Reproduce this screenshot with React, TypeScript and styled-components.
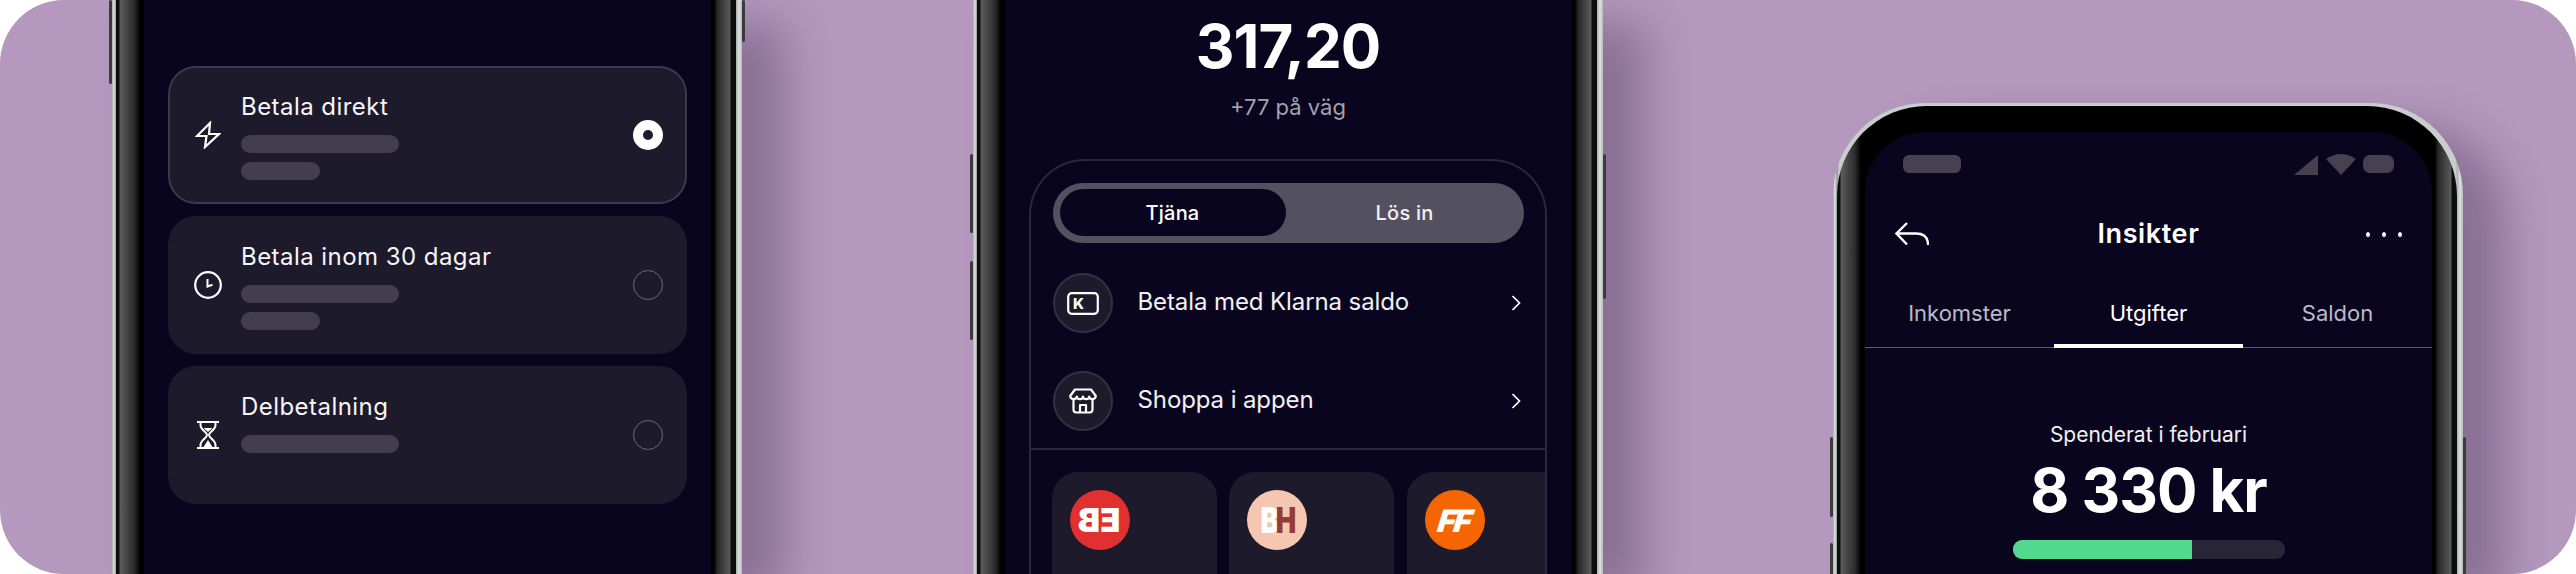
import React from 'react';
import styled, { createGlobalStyle } from 'styled-components';

const GlobalStyle = createGlobalStyle`
  html, body {
    margin: 0;
    height: 574px;
    overflow: hidden;
    background: #fff;
  }
  * {
    box-sizing: border-box;
  }
`;

const BoltIcon = () => (
  <svg width="26" height="28" viewBox="0 0 26 28" fill="none" stroke="#fff" strokeWidth="2.2">
    <path d="M15 2 L2 15 H11.5 L10 26 L24 13 H14 Z" />
  </svg>
);

const ClockIcon = () => (
  <svg width="28" height="28" viewBox="0 0 28 28" fill="none" stroke="#fff" strokeWidth="2.2">
    <circle cx="14" cy="14" r="12.8" />
    <path d="M13.5 8 V15.5 L18.5 13.8" strokeWidth="2" />
  </svg>
);

const HourglassIcon = () => (
  <svg width="24" height="30" viewBox="0 0 24 30" fill="none" stroke="#fff" strokeWidth="2">
    <path d="M1 2 H23 M1 28 H23" />
    <path d="M4.5 2 V5 C4.5 10 11 12 11 15 C11 18 4.5 20 4.5 25 V28 M19.5 2 V5 C19.5 10 13 12 13 15 C13 18 19.5 20 19.5 25 V28" />
    <path d="M7.5 8 H16.5 L12 12 Z" fill="#fff" stroke="none" />
    <path d="M12 20 L16.5 27 H7.5 Z" fill="#fff" stroke="none" />
  </svg>
);

const WalletIcon = () => (
  <svg width="32" height="23" viewBox="0 0 32 23" fill="none">
    <rect x="1.2" y="1.2" width="29.6" height="20.6" rx="3.5" stroke="#fff" strokeWidth="2.2" />
    <text x="6" y="17" fill="#fff" fontFamily="Inter, sans-serif" fontSize="15" fontWeight="800">K</text>
  </svg>
);

const StoreIcon = () => (
  <svg width="28" height="26" viewBox="0 0 28 26" fill="none" stroke="#fff" strokeWidth="2.2" strokeLinejoin="round">
    <path d="M6 1.5 H22 L26.8 8 C26.5 12 20.5 12 20.2 8.6 C19.8 12 14.4 12 14 8.6 C13.6 12 8.2 12 7.8 8.6 C7.5 12 1.5 12 1.2 8 Z" />
    <path d="M4.5 11 V21.5 A3 3 0 0 0 7.5 24.5 H20.5 A3 3 0 0 0 23.5 21.5 V11" />
    <path d="M11 24.5 V17 H17 V24.5" />
  </svg>
);

const ChevronIcon = () => (
  <svg width="10" height="16" viewBox="0 0 10 16" fill="none" stroke="#fff" strokeWidth="1.7">
    <path d="M1.5 1 L8.5 8 L1.5 15" />
  </svg>
);

const BackIcon = () => (
  <svg width="34" height="24" viewBox="0 0 34 24" fill="none" stroke="#fff" strokeWidth="2.4">
    <path d="M12 1 L1.5 11.5 L12 22.5 M1.5 11.5 H21 C28 11.5 33 15 33 23" />
  </svg>
);

const SignalIcon = () => (
  <svg width="24" height="20" viewBox="0 0 24 20">
    <path d="M24 0 V20 H0 Z" fill="#45414f" />
  </svg>
);

const WifiIcon = () => (
  <svg width="30" height="22" viewBox="0 0 30 22">
    <path d="M15 22 L0 6 Q15 -4 30 6 Z" fill="#45414f" />
  </svg>
);

const Stage = styled.div`
  width: 2576px;
  height: 574px;
  display: flex;
  align-items: stretch;
  gap: 230.5px;
  padding-left: 112px;
  overflow: hidden;
  border-radius: 64px;
  background: #b498bd;
  font-family: Inter, 'Noto Sans', sans-serif;
  color: #fff;
`;

const Phone = styled.div<{ $standing?: boolean }>`
  position: relative;
  flex: 0 0 630px;
  min-width: 0;
  display: flex;
  margin-top: ${p => (p.$standing ? '103px' : '0')};
  padding: ${p => (p.$standing ? '3px' : '0')} 6px 0 4px;
  border-radius: ${p => (p.$standing ? '92px 92px 0 0' : '0')};
  background: linear-gradient(90deg, #a6abab 0, #dfe4e3 2px, #8f9494 4px, #c9cdcd 6px, #c9cdcd calc(100% - 7px), #a8adad calc(100% - 6px), #dde2e1 calc(100% - 3px), #b5baba 100%);
  box-shadow: 42px 24px 44px rgba(55, 35, 70, 0.34);
`;

const SideButton = styled.span<{ $right?: boolean; $top: number; $height: number }>`
  position: absolute;
  top: ${p => p.$top}px;
  ${p => (p.$right ? 'right: -3px;' : 'left: -3px;')}
  width: 3px;
  height: ${p => p.$height}px;
  border-radius: 2px;
  background: #3b3b3d;
`;

const Bezel = styled.div<{ $standing?: boolean }>`
  flex: 1;
  display: flex;
  min-width: 0;
  padding: ${p => (p.$standing ? '26px' : '0')} 25px 0 28px;
  border-radius: ${p => (p.$standing ? '90px 90px 0 0' : '0')};
  background: linear-gradient(90deg, #0d0d0d 0, #0d0d0d 3px, #5c5c5c 4px, #2c2c2c 18px, #000 24px, #000 calc(100% - 22px), #272727 calc(100% - 19px), #5a5a5a calc(100% - 6px), #0d0d0d calc(100% - 5px), #0d0d0d 100%);
`;

const Screen = styled.div<{ $standing?: boolean }>`
  flex: 1;
  min-width: 0;
  display: flex;
  flex-direction: column;
  overflow: hidden;
  border-radius: ${p => (p.$standing ? '60px 60px 0 0' : '0')};
  background: #0a051f;
`;

const OptionList = styled.div`
  display: flex;
  flex-direction: column;
  gap: 12px;
  padding: 66px 24px 0;
`;

const OptionCard = styled.div<{ $selected?: boolean }>`
  height: 138px;
  display: flex;
  align-items: center;
  padding: 0 22px 0 24px;
  border-radius: 28px;
  border: 2px solid ${p => (p.$selected ? '#3d394b' : '#1d1a2b')};
  background: #1d1a2b;
`;

const OptionIcon = styled.div`
  flex: 0 0 28px;
  display: flex;
  align-items: center;
  justify-content: center;
  margin-right: 19px;
`;

const OptionText = styled.div`
  flex: 1;
  align-self: flex-start;
  padding-top: 22.5px;
`;

const OptionTitle = styled.div`
  font-size: 24px;
  line-height: 32px;
  letter-spacing: 0.45px;
  margin-bottom: 12.5px;
  color: #f6f5f8;
`;

const Placeholder = styled.div<{ $width: number }>`
  width: ${p => p.$width}px;
  height: 18px;
  margin-bottom: 9px;
  border-radius: 9px;
  background: #423e4e;
`;

const Radio = styled.div<{ $selected?: boolean }>`
  flex: 0 0 30px;
  height: 30px;
  border-radius: 50%;
  ${p =>
    p.$selected
      ? 'border: 10px solid #fff; background: #1d1a2b;'
      : 'border: 1.5px solid #6a6776;'}
`;

const Balance = styled.div`
  margin-top: 10px;
  text-align: center;
  font-size: 60px;
  line-height: 72px;
  letter-spacing: -1px;
  font-weight: 700;
`;

const OnTheWay = styled.div`
  margin-top: 9px;
  text-align: center;
  font-size: 22px;
  line-height: 32px;
  color: #a3a1ad;
`;

const Panel = styled.div`
  flex: 1;
  display: flex;
  flex-direction: column;
  min-height: 0;
  margin: 36px 25px 0 24px;
  overflow: hidden;
  border: 2px solid #2b2839;
  border-bottom: 0;
  border-radius: 56px 56px 0 0;
`;

const PanelTop = styled.div`
  display: flex;
  flex-direction: column;
  padding: 22px 21px 17px 22px;
  border-bottom: 2px solid #2b2839;
`;

const Segmented = styled.div`
  height: 60px;
  display: flex;
  align-items: stretch;
  margin-bottom: 30px;
  padding: 6px 0 7px 7px;
  border-radius: 30px;
  background: #53515f;
`;

const Segment = styled.div<{ $active?: boolean }>`
  flex: ${p => (p.$active ? '0 0 226px' : '1')};
  display: flex;
  align-items: center;
  justify-content: center;
  border-radius: 24px;
  font-size: 20px;
  font-weight: 500;
  letter-spacing: 0.2px;
  color: ${p => (p.$active ? '#fff' : '#f1f0f3')};
  background: ${p => (p.$active ? '#0a051f' : 'transparent')};
`;

const ActionRow = styled.div`
  height: 60px;
  display: flex;
  align-items: center;
  margin-bottom: 38px;
  &:last-child {
    margin-bottom: 0;
  }
`;

const ActionIcon = styled.div`
  flex: 0 0 60px;
  height: 60px;
  display: flex;
  align-items: center;
  justify-content: center;
  margin-right: 25px;
  border: 2px solid #34313f;
  border-radius: 50%;
  background: #1d1a2b;
`;

const ActionLabel = styled.div`
  flex: 1;
  font-size: 24px;
  line-height: 28px;
  margin-top: -3px;
  letter-spacing: -0.1px;
  color: #f1f0f3;
`;

const ChevronSlot = styled.div`
  display: flex;
  margin-right: 3px;
`;

const Shelf = styled.div`
  flex: 1;
  display: flex;
  gap: 12.5px;
  padding: 22px 0 0 21px;
`;

const MerchantCard = styled.div`
  flex: 0 0 165px;
  padding: 18px;
  border-radius: 26px 26px 0 0;
  background: #1d1a2b;
`;

const MerchantLogo = styled.div<{ $bg: string }>`
  width: 60px;
  height: 60px;
  display: flex;
  align-items: center;
  justify-content: center;
  overflow: hidden;
  border-radius: 50%;
  background: ${p => p.$bg};
  font-family: Inter, sans-serif;
  font-weight: 900;
  line-height: 1;
`;

const MirroredMark = styled.span`
  font-size: 33px;
  letter-spacing: 0;
  color: #fff;
  transform: scaleX(-1);
`;

const SplitMark = styled.span`
  display: inline-flex;
  font-size: 35px;
  letter-spacing: -4px;
  color: #fff;
  transform: scaleX(0.78);
`;

const SplitTail = styled.span`
  color: #963a38;
`;

const SlantMark = styled.span`
  font-size: 31px;
  font-style: italic;
  letter-spacing: -2px;
  color: #fff;
  transform: skewX(-8deg);
`;

const StatusBar = styled.div`
  height: 22px;
  display: flex;
  align-items: flex-end;
  justify-content: space-between;
  margin-top: 21px;
  padding: 0 38px;
`;

const StatusPill = styled.div`
  width: 58px;
  height: 18px;
  margin-bottom: 2px;
  border-radius: 6px;
  background: #45414f;
`;

const StatusIcons = styled.div`
  display: flex;
  align-items: flex-end;
  gap: 8px;
`;

const Battery = styled.div`
  width: 31px;
  height: 18px;
  margin: 0 0 2px -1px;
  border-radius: 7px;
  background: #45414f;
`;

const NavBar = styled.div`
  height: 50px;
  display: grid;
  grid-template-columns: 1fr auto 1fr;
  align-items: center;
  margin-top: 34px;
  padding: 0 30px;
`;

const NavTitle = styled.div`
  margin-top: -2px;
  font-size: 27px;
  font-weight: 600;
  letter-spacing: 0.6px;
`;

const NavDots = styled.div`
  justify-self: end;
  display: flex;
  gap: 12px;
`;

const NavDot = styled.span`
  width: 4px;
  height: 5px;
  border-radius: 50%;
  background: #fff;
`;

const Tabs = styled.div`
  display: grid;
  grid-template-columns: repeat(3, 1fr);
  margin-top: 38px;
  border-bottom: 1.5px solid #5d5a6a;
`;

const Tab = styled.div<{ $active?: boolean }>`
  height: 51px;
  margin-bottom: -1px;
  border-bottom: 4px solid ${p => (p.$active ? '#fff' : 'transparent')};
  text-align: center;
  font-size: 22px;
  line-height: 32px;
  color: ${p => (p.$active ? '#fff' : '#bcbac4')};
`;

const SpendLabel = styled.div`
  margin-top: 73px;
  text-align: center;
  font-size: 21px;
  line-height: 28px;
  color: #f1f0f3;
`;

const SpendAmount = styled.div`
  margin-top: 5px;
  text-align: center;
  font-size: 60px;
  line-height: 72px;
  letter-spacing: -1px;
  font-weight: 700;
`;

const ProgressTrack = styled.div`
  width: 272px;
  height: 19px;
  margin: 14px auto 0;
  overflow: hidden;
  border-radius: 9px;
  background: #282536;
`;

const ProgressFill = styled.div`
  height: 100%;
  background: #54da8f;
`;

const App: React.FC = () => (
  <>
    <GlobalStyle />
    <Stage>
      <Phone>
        <SideButton $top={0} $height={84} />
        <SideButton $right $top={0} $height={42} />
        <Bezel>
          <Screen>
            <OptionList>
              <OptionCard $selected>
                <OptionIcon><BoltIcon /></OptionIcon>
                <OptionText>
                  <OptionTitle>Betala direkt</OptionTitle>
                  <Placeholder $width={158} />
                  <Placeholder $width={79} />
                </OptionText>
                <Radio $selected />
              </OptionCard>
              <OptionCard>
                <OptionIcon><ClockIcon /></OptionIcon>
                <OptionText>
                  <OptionTitle>Betala inom 30 dagar</OptionTitle>
                  <Placeholder $width={158} />
                  <Placeholder $width={79} />
                </OptionText>
                <Radio />
              </OptionCard>
              <OptionCard>
                <OptionIcon><HourglassIcon /></OptionIcon>
                <OptionText>
                  <OptionTitle>Delbetalning</OptionTitle>
                  <Placeholder $width={158} />
                </OptionText>
                <Radio />
              </OptionCard>
            </OptionList>
          </Screen>
        </Bezel>
      </Phone>

      <Phone>
        <SideButton $top={154} $height={79} />
        <SideButton $top={261} $height={79} />
        <SideButton $right $top={154} $height={145} />
        <Bezel>
          <Screen>
            <Balance>317,20</Balance>
            <OnTheWay>+77 på väg</OnTheWay>
            <Panel>
              <PanelTop>
                <Segmented>
                  <Segment $active>Tjäna</Segment>
                  <Segment>Lös in</Segment>
                </Segmented>
                <ActionRow>
                  <ActionIcon><WalletIcon /></ActionIcon>
                  <ActionLabel>Betala med Klarna saldo</ActionLabel>
                  <ChevronSlot><ChevronIcon /></ChevronSlot>
                </ActionRow>
                <ActionRow>
                  <ActionIcon><StoreIcon /></ActionIcon>
                  <ActionLabel>Shoppa i appen</ActionLabel>
                  <ChevronSlot><ChevronIcon /></ChevronSlot>
                </ActionRow>
              </PanelTop>
              <Shelf>
                <MerchantCard>
                  <MerchantLogo $bg="#e03030"><MirroredMark>EB</MirroredMark></MerchantLogo>
                </MerchantCard>
                <MerchantCard>
                  <MerchantLogo $bg="#f6c7b0"><SplitMark>B<SplitTail>H</SplitTail></SplitMark></MerchantLogo>
                </MerchantCard>
                <MerchantCard>
                  <MerchantLogo $bg="#f56500"><SlantMark>FF</SlantMark></MerchantLogo>
                </MerchantCard>
              </Shelf>
            </Panel>
          </Screen>
        </Bezel>
      </Phone>

      <Phone $standing>
        <SideButton $top={334} $height={80} />
        <SideButton $top={440} $height={80} />
        <SideButton $right $top={334} $height={140} />
        <Bezel $standing>
          <Screen $standing>
            <StatusBar>
              <StatusPill />
              <StatusIcons>
                <SignalIcon />
                <WifiIcon />
                <Battery />
              </StatusIcons>
            </StatusBar>
            <NavBar>
              <BackIcon />
              <NavTitle>Insikter</NavTitle>
              <NavDots>
                <NavDot />
                <NavDot />
                <NavDot />
              </NavDots>
            </NavBar>
            <Tabs>
              <Tab>Inkomster</Tab>
              <Tab $active>Utgifter</Tab>
              <Tab>Saldon</Tab>
            </Tabs>
            <SpendLabel>Spenderat i februari</SpendLabel>
            <SpendAmount>8 330 kr</SpendAmount>
            <ProgressTrack>
              <ProgressFill style={{ width: `${(179 / 272) * 100}%` }} />
            </ProgressTrack>
          </Screen>
        </Bezel>
      </Phone>
    </Stage>
  </>
);

export default App;
